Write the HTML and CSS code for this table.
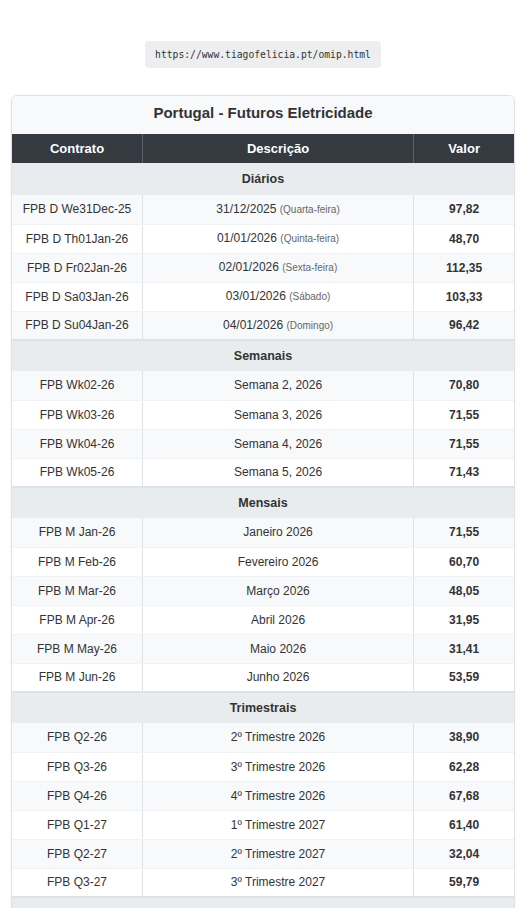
FILE: index.html
```html
<!DOCTYPE html>
<html lang="pt">
<head>
    <meta charset="UTF-8">
    <title>OMIP - Futuros Eletricidade</title>
    <link rel="stylesheet" href="styles.css">
</head>
<body>
    <div class="url"><code>https://www.tiagofelicia.pt/omip.html</code></div>
    <div class="card">
        <div class="card-title">Portugal - Futuros Eletricidade</div>
        <table class="omip">
            <colgroup>
                <col class="c1">
                <col class="c2">
                <col class="c3">
            </colgroup>
            <thead>
                <tr><th>Contrato</th><th>Descrição</th><th>Valor</th></tr>
            </thead>
            <!-- diarios -->
            <tbody>
                <tr class="section"><td colspan="3">Diários</td></tr>
                <tr><td>FPB D We31Dec-25</td><td>31/12/2025 <span class="dia">(Quarta-feira)</span></td><td class="val">97,82</td></tr>
                <tr><td>FPB D Th01Jan-26</td><td>01/01/2026 <span class="dia">(Quinta-feira)</span></td><td class="val">48,70</td></tr>
                <tr><td>FPB D Fr02Jan-26</td><td>02/01/2026 <span class="dia">(Sexta-feira)</span></td><td class="val">112,35</td></tr>
                <tr><td>FPB D Sa03Jan-26</td><td>03/01/2026 <span class="dia">(Sábado)</span></td><td class="val">103,33</td></tr>
                <tr><td>FPB D Su04Jan-26</td><td>04/01/2026 <span class="dia">(Domingo)</span></td><td class="val">96,42</td></tr>
            </tbody>
            <!-- semanais -->
            <tbody>
                <tr class="section"><td colspan="3">Semanais</td></tr>
                <tr><td>FPB Wk02-26</td><td>Semana 2, 2026</td><td class="val">70,80</td></tr>
                <tr><td>FPB Wk03-26</td><td>Semana 3, 2026</td><td class="val">71,55</td></tr>
                <tr><td>FPB Wk04-26</td><td>Semana 4, 2026</td><td class="val">71,55</td></tr>
                <tr><td>FPB Wk05-26</td><td>Semana 5, 2026</td><td class="val">71,43</td></tr>
            </tbody>
            <!-- mensais -->
            <tbody>
                <tr class="section"><td colspan="3">Mensais</td></tr>
                <tr><td>FPB M Jan-26</td><td>Janeiro 2026</td><td class="val">71,55</td></tr>
                <tr><td>FPB M Feb-26</td><td>Fevereiro 2026</td><td class="val">60,70</td></tr>
                <tr><td>FPB M Mar-26</td><td>Março 2026</td><td class="val">48,05</td></tr>
                <tr><td>FPB M Apr-26</td><td>Abril 2026</td><td class="val">31,95</td></tr>
                <tr><td>FPB M May-26</td><td>Maio 2026</td><td class="val">31,41</td></tr>
                <tr><td>FPB M Jun-26</td><td>Junho 2026</td><td class="val">53,59</td></tr>
            </tbody>
            <!-- trimestrais -->
            <tbody>
                <tr class="section"><td colspan="3">Trimestrais</td></tr>
                <tr><td>FPB Q2-26</td><td>2º Trimestre 2026</td><td class="val">38,90</td></tr>
                <tr><td>FPB Q3-26</td><td>3º Trimestre 2026</td><td class="val">62,28</td></tr>
                <tr><td>FPB Q4-26</td><td>4º Trimestre 2026</td><td class="val">67,68</td></tr>
                <tr><td>FPB Q1-27</td><td>1º Trimestre 2027</td><td class="val">61,40</td></tr>
                <tr><td>FPB Q2-27</td><td>2º Trimestre 2027</td><td class="val">32,04</td></tr>
                <tr><td>FPB Q3-27</td><td>3º Trimestre 2027</td><td class="val">59,79</td></tr>
            </tbody>
            <!-- anuais -->
            <tbody>
                <tr class="section"><td colspan="3">Anuais</td></tr>
                <tr><td>FPB YR-27</td><td>Ano 2027</td><td class="val">55,20</td></tr>
                <tr><td>FPB YR-28</td><td>Ano 2028</td><td class="val">50,10</td></tr>
            </tbody>
        </table>
    </div>
</body>
</html>
```

FILE: styles.css
```css
*{
    margin: 0;
    padding: 0;
    box-sizing: border-box;
}
body{
    padding: 41px 11px 20px;
    background: #fff;
    color: #333;
    font-family: "Liberation Sans", Arial, sans-serif;
}
.url{
    text-align: center;
}
.url code{
    display: inline-block;
    padding: 7px 10px 6px;
    background: #eceef0;
    border-radius: 4px;
    font-family: "DejaVu Sans Mono", "Liberation Mono", monospace;
    font-size: 9.7px;
    line-height: 14px;
    color: #333;
}
.card{
    margin-top: 27px;
    border: 1px solid #dee2e6;
    border-radius: 6px;
    overflow: hidden;
    background: #fff;
    box-shadow: 0 1px 3px rgba(0,0,0,.05);
}
.card-title{
    padding: 8px 8px 12px;
    background: #f8f9fa;
    font-size: 15px;
    font-weight: bold;
    line-height: 18px;
    text-align: center;
    color: #333;
}
.omip{
    width: 100%;
    border-collapse: collapse;
    table-layout: fixed;
}
.c1{ width: 26%; }
.c2{ width: 54%; }
.c3{ width: 20%; }
.omip th{
    height: 29px;
    padding: 0 6px;
    background: #343a40;
    color: #fff;
    font-size: 13px;
    font-weight: bold;
    line-height: 15px;
    border-left: 1px solid #5b6168;
}
.omip th:first-child{
    border-left: none;
}
.omip td{
    height: 29px;
    padding: 0 6px;
    font-size: 12px;
    line-height: 14px;
    text-align: center;
    color: #333;
    border-left: 1px solid #dee2e6;
    border-bottom: 1px solid #f1f2f4;
}
.omip td:first-child{
    border-left: none;
}
.omip tr:nth-child(even) td{
    background: #f8f9fa;
}
.omip .section td{
    height: 31px;
    background: #e9ecef;
    font-size: 12.5px;
    font-weight: bold;
    border-top: 2px solid #dee2e6;
    border-bottom: none;
}
.omip thead + tbody .section td{
    border-top: none;
    height: 32px;
}
.val{
    font-weight: bold;
}
.dia{
    font-size: 10px;
    color: #666;
}
```
